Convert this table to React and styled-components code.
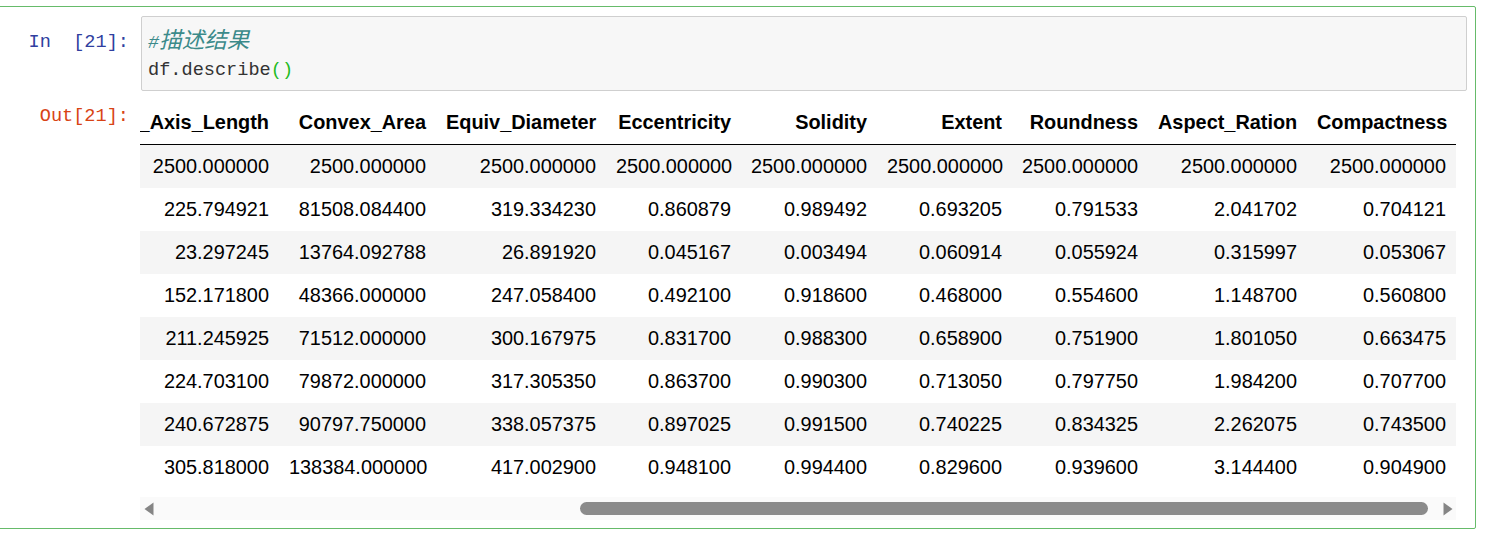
import React, { useLayoutEffect, useRef, useState } from "react";
import styled, { createGlobalStyle } from "styled-components";

const Global = createGlobalStyle`
  html, body { margin: 0; padding: 0; background: #fff; }
  body { overflow: hidden; }
`;

const Cell = styled.div`
  margin: 6px 9px 0 -10px;
  border: 1px solid #66bb6a;
  border-radius: 2px;
  padding: 9px 8px 8px 0;
  display: flex;
  flex-direction: column;
`;

const Row = styled.div`
  display: flex;
  align-items: flex-start;
  margin-top: ${(p) => p.$gap || 0}px;
`;

const Prompt = styled.div`
  flex: 0 0 ${(p) => p.$w}px;
  box-sizing: border-box;
  padding-right: ${(p) => p.$pr}px;
  padding-top: ${(p) => p.$pt || 0}px;
  text-align: right;
  white-space: pre;
  font-family: "Liberation Mono", "DejaVu Sans Mono", monospace;
  font-size: 18.6px;
  line-height: 28px;
  color: ${(p) => p.$color};
`;

const InputBox = styled.div`
  flex: 1;
  background: #f7f7f7;
  border: 1px solid #cfcfcf;
  border-radius: 2px;
  padding: 12px 6px 5px;
  font-family: "Liberation Mono", "Noto Sans CJK SC", monospace;
  font-size: 18.6px;
  line-height: 28px;
  color: #333;
`;

const CodeLine = styled.div`
  white-space: pre;
  height: 28px;
`;

const Comment = styled.span`
  font-style: italic;
  color: #3b8a8a;
`;

const CjkText = styled.span`
  font-family: "Noto Sans CJK SC", sans-serif;
  font-size: 22.5px;
  line-height: 18px;
`;

const Bracket = styled.span`
  color: #22bb22;
`;

const OutputArea = styled.div`
  flex: 1;
  min-width: 0;
  margin-right: 11px;
  display: flex;
  flex-direction: column;
`;

const ScrollClip = styled.div`
  overflow: hidden;
  width: 100%;
`;

const Table = styled.table`
  border-collapse: collapse;
  table-layout: fixed;
  font-family: "Liberation Sans", Arial, sans-serif;
  font-size: 19.9px;
  color: #000;
`;

const HeadCell = styled.th`
  height: 43px;
  padding: 0 10px;
  text-align: right;
  font-weight: bold;
  white-space: nowrap;
  overflow: hidden;
  vertical-align: middle;
  border-bottom: 1px solid #000;
`;

const BodyRow = styled.tr`
  background: ${(p) => (p.$odd ? "#f5f5f5" : "#fff")};
`;

const DataCell = styled.td`
  height: 43px;
  padding: 0 10px;
  text-align: right;
  white-space: nowrap;
  overflow: hidden;
  vertical-align: middle;
  font-weight: ${(p) => (p.$index ? "bold" : "normal")};
`;

const Scrollbar = styled.div`
  margin-top: 8px;
  height: 23px;
  background: #fafafa;
  display: flex;
  align-items: center;
`;

const ArrowButton = styled.div`
  flex: 0 0 17px;
  height: 23px;
  display: flex;
  align-items: center;
  justify-content: center;
`;

const Track = styled.div`
  flex: 1;
  height: 23px;
  box-sizing: border-box;
  padding: 0 11px 0 4px;
  display: flex;
  align-items: center;
  justify-content: flex-end;
`;

const Thumb = styled.div`
  height: 13px;
  border-radius: 7px;
  background: #8b8b8b;
`;

const columns = [
  { name: "", w: 90 },
  { name: "Area", w: 160 },
  { name: "Perimeter", w: 150 },
  { name: "Major_Axis_Length", w: 180 },
  { name: "Minor_Axis_Length", w: 210 },
  { name: "Convex_Area", w: 157 },
  { name: "Equiv_Diameter", w: 170 },
  { name: "Eccentricity", w: 135 },
  { name: "Solidity", w: 136 },
  { name: "Extent", w: 135 },
  { name: "Roundness", w: 136 },
  { name: "Aspect_Ration", w: 159 },
  { name: "Compactness", w: 149 },
];

const rows = [
  ["count", "2500.000000", "2500.000000", "2500.000000", "2500.000000", "2500.000000", "2500.000000", "2500.000000", "2500.000000", "2500.000000", "2500.000000", "2500.000000", "2500.000000"],
  ["mean", "80658.220800", "1130.279015", "456.601840", "225.794921", "81508.084400", "319.334230", "0.860879", "0.989492", "0.693205", "0.791533", "2.041702", "0.704121"],
  ["std", "13664.510228", "109.256418", "56.235704", "23.297245", "13764.092788", "26.891920", "0.045167", "0.003494", "0.060914", "0.055924", "0.315997", "0.053067"],
  ["min", "47939.000000", "868.485000", "320.844600", "152.171800", "48366.000000", "247.058400", "0.492100", "0.918600", "0.468000", "0.554600", "1.148700", "0.560800"],
  ["25%", "70765.000000", "1048.829750", "414.957850", "211.245925", "71512.000000", "300.167975", "0.831700", "0.988300", "0.658900", "0.751900", "1.801050", "0.663475"],
  ["50%", "79076.000000", "1123.672000", "449.496600", "224.703100", "79872.000000", "317.305350", "0.863700", "0.990300", "0.713050", "0.797750", "1.984200", "0.707700"],
  ["75%", "89757.500000", "1203.340500", "492.737650", "240.672875", "90797.750000", "338.057375", "0.897025", "0.991500", "0.740225", "0.834325", "2.262075", "0.743500"],
  ["max", "136574.000000", "1559.450000", "661.911300", "305.818000", "138384.000000", "417.002900", "0.948100", "0.994400", "0.829600", "0.939600", "3.144400", "0.904900"],
];

const totalWidth = columns.reduce((s, c) => s + c.w, 0);

function LeftArrow() {
  return (
    <svg width="10" height="14" viewBox="0 0 10 14">
      <polygon points="9.5,0.5 9.5,13.5 0.5,7" fill="#858585" />
    </svg>
  );
}

function RightArrow() {
  return (
    <svg width="10" height="14" viewBox="0 0 10 14">
      <polygon points="0.5,0.5 0.5,13.5 9.5,7" fill="#858585" />
    </svg>
  );
}

export default function App() {
  const clipRef = useRef(null);
  const [ratio, setRatio] = useState(0.668);

  useLayoutEffect(() => {
    const el = clipRef.current;
    if (!el) return;
    el.scrollLeft = el.scrollWidth;
    setRatio(el.clientWidth / el.scrollWidth);
  }, []);

  return (
    <>
      <Global />
      <Cell>
        <Row>
          <Prompt $w={150} $pr={12} $pt={13} $color="#303f9f">{"In  [21]:"}</Prompt>
          <InputBox>
            <CodeLine>
              <Comment>
                #<CjkText>描述结果</CjkText>
              </Comment>
            </CodeLine>
            <CodeLine>
              df.describe<Bracket>()</Bracket>
            </CodeLine>
          </InputBox>
        </Row>
        <Row $gap={10}>
          <Prompt $w={149} $pr={11} $pt={2} $color="#d84315">{"Out[21]:"}</Prompt>
          <OutputArea>
            <ScrollClip ref={clipRef}>
              <Table style={{ width: totalWidth }}>
                <colgroup>
                  {columns.map((c, i) => (
                    <col key={i} style={{ width: c.w }} />
                  ))}
                </colgroup>
                <thead>
                  <tr>
                    {columns.map((c, i) => (
                      <HeadCell key={i}>{c.name}</HeadCell>
                    ))}
                  </tr>
                </thead>
                <tbody>
                  {rows.map((r, ri) => (
                    <BodyRow key={ri} $odd={ri % 2 === 0}>
                      {r.map((v, ci) => (
                        <DataCell key={ci} $index={ci === 0}>
                          {v}
                        </DataCell>
                      ))}
                    </BodyRow>
                  ))}
                </tbody>
              </Table>
            </ScrollClip>
            <Scrollbar>
              <ArrowButton>
                <LeftArrow />
              </ArrowButton>
              <Track>
                <Thumb style={{ width: `${ratio * 100}%` }} />
              </Track>
              <ArrowButton>
                <RightArrow />
              </ArrowButton>
            </Scrollbar>
          </OutputArea>
        </Row>
      </Cell>
    </>
  );
}
